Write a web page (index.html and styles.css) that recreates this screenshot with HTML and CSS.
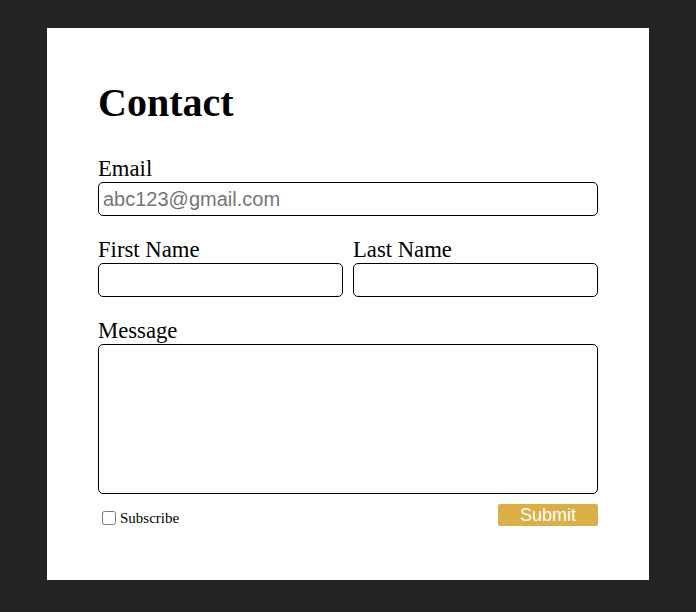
FILE: index.html
```html
<!DOCTYPE html>
<html lang="en">
<head>
<meta charset="utf-8">
<title>Contact</title>
<link rel="stylesheet" href="styles.css">
</head>
<body>
<main class="card">
  <h1 class="title">Contact</h1>
  <form class="form">
    <div class="field">
      <label class="label" for="email">Email</label>
      <input class="input" id="email" type="email" placeholder="abc123@gmail.com">
    </div>
    <div class="names">
      <div class="field">
        <label class="label" for="first">First Name</label>
        <input class="input" id="first" type="text">
      </div>
      <div class="field">
        <label class="label" for="last">Last Name</label>
        <input class="input" id="last" type="text">
      </div>
    </div>
    <div class="field">
      <label class="label" for="msg">Message</label>
      <textarea class="textarea" id="msg"></textarea>
    </div>
    <div class="actions">
      <label class="subscribe"><input type="checkbox" class="check">Subscribe</label>
      <button type="button" class="submit">Submit</button>
    </div>
  </form>
</main>
</body>
</html>
```
FILE: styles.css
```css
html, body {
  margin: 0;
  padding: 0;
}
body {
  background: #232323;
  font-family: "Liberation Serif", "Times New Roman", serif;
  color: #000;
  padding-top: 28px;
}
.card {
  width: 602px;
  box-sizing: border-box;
  margin: 0 auto;
  background: #fff;
  padding: 52px 51px 54px;
}
.title {
  margin: 0;
  font-size: 40px;
  line-height: 46px;
  font-weight: bold;
}
.form {
  margin-top: 30px;
  display: flex;
  flex-direction: column;
  gap: 21px;
}
.field {
  display: flex;
  flex-direction: column;
}
.label {
  font-size: 22.7px;
  line-height: 26px;
}
.input, .textarea {
  box-sizing: border-box;
  width: 100%;
  border: 1px solid #000;
  border-radius: 5px;
  font-family: "Liberation Sans", Arial, sans-serif;
  font-size: 20px;
  padding: 0 4px;
  margin: 0;
  outline: none;
}
.input {
  height: 34px;
}
.textarea {
  height: 150px;
  resize: none;
  display: block;
}
.input::placeholder {
  color: #757575;
}
.names {
  display: grid;
  grid-template-columns: 1fr 1fr;
  gap: 10px;
}
.actions {
  margin-top: -11px;
  height: 22px;
  display: flex;
  justify-content: space-between;
  align-items: flex-start;
}
.subscribe {
  display: flex;
  align-items: center;
  font-size: 15px;
  line-height: 17px;
  margin-top: 4px;
}
.check {
  width: 14px;
  height: 14px;
  margin: 3px 4px 3px 4px;
}
.submit {
  width: 100px;
  height: 22px;
  border: none;
  border-radius: 2px;
  background: #dbaf46;
  color: #fff;
  font-family: "Liberation Sans", Arial, sans-serif;
  font-size: 18px;
  line-height: 22px;
  padding: 0;
  cursor: pointer;
}
```
